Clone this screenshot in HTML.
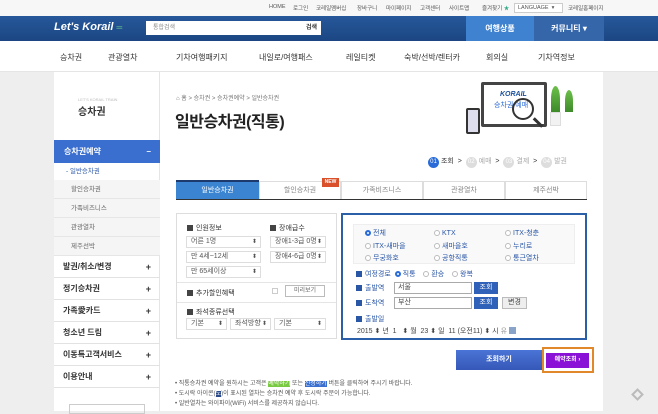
<!DOCTYPE html>
<html><head><meta charset="utf-8"><style>
*{margin:0;padding:0;box-sizing:border-box}
body{width:658px;height:411px;overflow:hidden;background:#eeeeee;font-family:"Liberation Sans","Noto Sans CJK KR",sans-serif;font-size:7px;color:#444;position:relative}
.a{position:absolute;white-space:nowrap}
.sel{position:absolute;height:12px;border:1px solid #ddd;background:#fff;font-size:7px;line-height:10px;padding-left:4px;color:#555}
.sel:after{content:"⬍";position:absolute;right:3px;top:0;font-size:6px}
.bul{display:inline-block;width:6px;height:6px;background:#444;margin-right:3px;vertical-align:-1px}
.bbul{display:inline-block;width:6px;height:6px;background:#2a56a6;margin-right:3px;vertical-align:-1px}
.rad{display:inline-block;width:6px;height:6px;border:1px solid #bbb;border-radius:50%;margin-right:2px;vertical-align:-1px;background:#fff}
.rad.on{border:2px solid #2a6bd8}
.menu{position:absolute;left:54px;width:106px;height:22px;border-bottom:1px solid #e2e2e2;font-size:8px;font-weight:bold;color:#333;line-height:22px;padding-left:9px}
.menu b{position:absolute;right:9px;font-size:9px}
.sub{position:absolute;left:54px;width:106px;height:19px;background:#f5f5f5;border-bottom:1px solid #e6e6e6;font-size:6.5px;color:#666;line-height:19px;padding-left:17px}
.tab{position:absolute;top:181px;height:18px;border:1px solid #ddd;border-bottom:none;background:#fff;font-size:7px;color:#888;text-align:center;line-height:18px}
.tl{position:absolute;top:4px;font-size:5.5px;color:#555}
</style></head><body>
<!-- top bar -->
<div class="a" style="left:0;top:0;width:658px;height:16px;background:#f7f7f7"></div>
<div class="tl" style="left:269px">HOME</div>
<div class="tl" style="left:293px">로그인</div>
<div class="tl" style="left:316px">코레일멤버십</div>
<div class="tl" style="left:357px">장바구니</div>
<div class="tl" style="left:386px">마이페이지</div>
<div class="tl" style="left:420px">고객센터</div>
<div class="tl" style="left:449px">사이트맵</div>
<div class="tl" style="left:482px">즐겨찾기 <span style="color:#3a8">★</span></div>
<div class="a" style="left:514px;top:3px;width:49px;height:10px;border:1px solid #ccc;background:#fff;font-size:5.5px;line-height:8px;padding-left:3px;color:#555">LANGUAGE &nbsp;▾</div>
<div class="tl" style="left:568px">코레일홈페이지</div>
<!-- blue header -->
<div class="a" style="left:0;top:16px;width:658px;height:25px;background:linear-gradient(#27589a,#1b4683)"></div>
<div class="a" style="left:54px;top:21px;font-size:11px;font-weight:bold;font-style:italic;color:#fff">Let's Korail <span style="color:#6fd28a;font-size:8px">═</span></div>
<div class="a" style="left:146px;top:21px;width:175px;height:14px;background:#fff;font-size:6px;color:#888;line-height:14px;padding-left:7px">통합검색<span style="position:absolute;right:4px;color:#333;font-weight:bold">검색</span></div>
<div class="a" style="left:466px;top:16px;width:68px;height:25px;background:#3f82cf;color:#fff;font-size:8px;font-weight:bold;text-align:center;line-height:25px">여행상품</div>
<div class="a" style="left:534px;top:16px;width:70px;height:25px;background:#3466a9;color:#fff;font-size:8px;font-weight:bold;text-align:center;line-height:25px">커뮤니티 ▾</div>
<!-- nav -->
<div class="a" style="left:0;top:41px;width:658px;height:31px;background:#fff;border-bottom:1px solid #e5e5e5"></div>
<div class="a" style="top:52px;left:60px;font-size:8px;color:#333">승차권</div>
<div class="a" style="top:52px;left:108px;font-size:8px;color:#333">관광열차</div>
<div class="a" style="top:52px;left:176px;font-size:8px;color:#333">기차여행패키지</div>
<div class="a" style="top:52px;left:259px;font-size:8px;color:#333">내일로/여행패스</div>
<div class="a" style="top:52px;left:346px;font-size:8px;color:#333">레일티켓</div>
<div class="a" style="top:52px;left:404px;font-size:8px;color:#333">숙박/선박/렌터카</div>
<div class="a" style="top:52px;left:486px;font-size:8px;color:#333">회의실</div>
<div class="a" style="top:52px;left:538px;font-size:8px;color:#333">기차역정보</div>
<!-- panels -->
<div class="a" style="left:54px;top:72px;width:106px;height:339px;background:#fff;border-right:1px solid #e5e5e5"></div>
<div class="a" style="left:160px;top:72px;width:443px;height:339px;background:#fff"></div>
<div class="a" style="left:78px;top:97px;font-size:4px;color:#bbb">LET'S KORAIL TRAIN</div>
<div class="a" style="left:78px;top:103px;font-size:10px;font-weight:bold;color:#333">승차권</div>
<div class="a" style="left:54px;top:140px;width:106px;height:23px;background:#3a6fd0;color:#fff;font-size:8px;font-weight:bold;line-height:23px;padding-left:10px">승차권예약<span style="position:absolute;right:9px">–</span></div>
<div class="a" style="left:54px;top:163px;width:106px;height:18px;font-size:6.5px;color:#2a56a6;line-height:18px;padding-left:12px">- 일반승차권</div>
<div class="sub" style="top:180px">할인승차권</div>
<div class="sub" style="top:199px">가족비즈니스</div>
<div class="sub" style="top:218px">관광열차</div>
<div class="sub" style="top:237px">제주선박</div>
<div class="menu" style="top:256px">발권/취소/변경<b>+</b></div>
<div class="menu" style="top:278px">정기승차권<b>+</b></div>
<div class="menu" style="top:300px">가족愛카드<b>+</b></div>
<div class="menu" style="top:322px">청소년 드림<b>+</b></div>
<div class="menu" style="top:344px">이동특고객서비스<b>+</b></div>
<div class="menu" style="top:366px">이용안내<b>+</b></div>
<div class="a" style="left:69px;top:404px;width:76px;height:10px;border:1px solid #ccc"></div>
<!-- main -->
<div class="a" style="left:176px;top:93px;font-size:6px;color:#777">⌂ 홈 &gt; 승차권 &gt; 승차권예약 &gt; 일반승차권</div>
<div class="a" style="left:175px;top:108px;font-size:16px;font-weight:bold;color:#222;letter-spacing:-0.5px">일반승차권(직통)</div>
<!-- illustration -->
<div class="a" style="left:481px;top:82px;width:66px;height:45px;border:3px solid #444;border-radius:2px;background:#fff"></div>
<div class="a" style="left:500px;top:91px;font-size:7px;font-weight:bold;font-style:italic;color:#1a4f9c">KORAIL</div>
<div class="a" style="left:494px;top:100px;font-size:7px;color:#2a6bd8">승차권 예매</div>
<div class="a" style="left:466px;top:108px;width:14px;height:26px;border:2px solid #333;border-radius:2px;background:#dde"></div>
<div class="a" style="left:512px;top:98px;width:22px;height:22px;border:2px solid #333;border-radius:50%"></div>
<div class="a" style="left:532px;top:121px;width:12px;height:3px;background:#333;transform:rotate(45deg)"></div>
<div class="a" style="left:551px;top:86px;width:9px;height:26px;background:linear-gradient(#6cbf4a,#3d8a2a);border-radius:50% 50% 0 0"></div>
<div class="a" style="left:550px;top:112px;width:11px;height:14px;background:#f2f2f2;border:1px solid #ddd"></div>
<div class="a" style="left:565px;top:90px;width:8px;height:22px;background:linear-gradient(#6cbf4a,#3d8a2a);border-radius:50% 50% 0 0"></div>
<!-- steps -->
<div class="a" style="left:428px;top:156px;font-size:7px;color:#333"><span style="display:inline-block;width:11px;height:11px;border-radius:50%;background:#2a6bd8;color:#fff;font-size:6px;text-align:center;line-height:11px">01</span> 조회 &nbsp;&gt;&nbsp; <span style="display:inline-block;width:11px;height:11px;border-radius:50%;background:#ddd;color:#fff;font-size:6px;text-align:center;line-height:11px">02</span> <span style="color:#aaa">예매</span> &nbsp;&gt;&nbsp; <span style="display:inline-block;width:11px;height:11px;border-radius:50%;background:#ddd;color:#fff;font-size:6px;text-align:center;line-height:11px">03</span> <span style="color:#aaa">결제</span> &nbsp;&gt;&nbsp; <span style="display:inline-block;width:11px;height:11px;border-radius:50%;background:#ddd;color:#fff;font-size:6px;text-align:center;line-height:11px">04</span> <span style="color:#aaa">발권</span></div>
<!-- tabs -->
<div class="tab" style="left:176px;top:180px;width:83px;height:20px;background:#3b84d2;color:#fff;border:none;border-top:2px solid #1c3a6e;line-height:17px">일반승차권</div>
<div class="tab" style="left:259px;width:82px">할인승차권</div>
<div class="a" style="left:322px;top:178px;width:17px;height:9px;background:#d9502a;color:#fff;font-size:5px;font-weight:bold;text-align:center;line-height:9px">NEW</div>
<div class="tab" style="left:341px;width:82px">가족비즈니스</div>
<div class="tab" style="left:423px;width:82px">관광열차</div>
<div class="tab" style="left:505px;width:82px">제주선박</div>
<div class="a" style="left:176px;top:199px;width:411px;height:1px;background:#333"></div>
<!-- left box -->
<div class="a" style="left:176px;top:213px;width:161px;height:126px;border:1px solid #ddd"></div>
<div class="a" style="left:187px;top:223px;color:#333"><span class="bul"></span>인원정보</div>
<div class="a" style="left:270px;top:223px;color:#333"><span class="bul"></span>장애급수</div>
<div class="sel" style="left:186px;top:236px;width:75px">어른 1명</div>
<div class="sel" style="left:186px;top:251px;width:75px">만 4세~12세</div>
<div class="sel" style="left:186px;top:266px;width:75px">만 65세이상</div>
<div class="sel" style="left:270px;top:236px;width:56px">장애1-3급 0명</div>
<div class="sel" style="left:270px;top:251px;width:56px">장애4-6급 0명</div>
<div class="a" style="left:177px;top:282px;width:159px;height:1px;background:#e5e5e5"></div>
<div class="a" style="left:187px;top:288px;color:#333"><span class="bul"></span>추가할인혜택</div>
<div class="a" style="left:272px;top:288px;width:6px;height:6px;border:1px solid #ccc"></div>
<div class="a" style="left:285px;top:285px;width:40px;height:12px;border:1px solid #bbb;font-size:6px;text-align:center;line-height:10px;color:#666">미리보기</div>
<div class="a" style="left:177px;top:302px;width:159px;height:1px;background:#e5e5e5"></div>
<div class="a" style="left:187px;top:307px;color:#333"><span class="bul"></span>좌석종류선택</div>
<div class="sel" style="left:186px;top:318px;width:41px">기본</div>
<div class="sel" style="left:230px;top:318px;width:41px">좌석방향</div>
<div class="sel" style="left:274px;top:318px;width:52px">기본</div>
<!-- right box -->
<div class="a" style="left:341px;top:213px;width:246px;height:127px;border:2px solid #2b5fa8"></div>
<div class="a" style="left:353px;top:224px;width:222px;height:40px;background:#f9f9f9;border:1px solid #eee"></div>
<div class="a" style="left:365px;top:228px;color:#2a56a6;line-height:12.5px">
<span class="rad on"></span>전체<br><span class="rad"></span>ITX-새마을<br><span class="rad"></span>무궁화호</div>
<div class="a" style="left:434px;top:228px;color:#2a56a6;line-height:12.5px">
<span class="rad"></span>KTX<br><span class="rad"></span>새마을호<br><span class="rad"></span>공항직통</div>
<div class="a" style="left:505px;top:228px;color:#2a56a6;line-height:12.5px">
<span class="rad"></span>ITX-청춘<br><span class="rad"></span>누리로<br><span class="rad"></span>통근열차</div>
<div class="a" style="left:356px;top:269px;color:#2a56a6"><span class="bbul"></span>여정경로 &nbsp;<span class="rad on"></span>직통 &nbsp;&nbsp;&nbsp;<span class="rad"></span>환승 &nbsp;&nbsp;&nbsp;<span class="rad"></span>왕복</div>
<div class="a" style="left:356px;top:283px;color:#2a56a6"><span class="bbul"></span>출발역</div>
<div class="a" style="left:394px;top:282px;width:78px;height:12px;border:1px solid #aaa;font-size:7px;line-height:10px;padding-left:3px">서울</div>
<div class="a" style="left:474px;top:282px;width:24px;height:12px;background:#2f61b8;color:#fff;font-size:7px;text-align:center;line-height:12px">조회</div>
<div class="a" style="left:356px;top:298px;color:#2a56a6"><span class="bbul"></span>도착역</div>
<div class="a" style="left:394px;top:297px;width:78px;height:12px;border:1px solid #aaa;font-size:7px;line-height:10px;padding-left:3px">부산</div>
<div class="a" style="left:474px;top:297px;width:24px;height:12px;background:#2f61b8;color:#fff;font-size:7px;text-align:center;line-height:12px">조회</div>
<div class="a" style="left:502px;top:297px;width:25px;height:12px;background:#eee;border:1px solid #bbb;font-size:7px;text-align:center;line-height:10px">변경</div>
<div class="a" style="left:356px;top:314px;color:#2a56a6"><span class="bbul"></span>출발일</div>
<div class="a" style="left:357px;top:326px;font-size:7px;color:#444">2015 ⬍ 년 &nbsp;1 &nbsp;&nbsp;⬍ 월 &nbsp;23 ⬍ 일 &nbsp;11 (오전11) ⬍ 시 <span style="color:#999">유</span> <span style="display:inline-block;width:7px;height:7px;background:#8aa3c9;vertical-align:-1px"></span></div>
<!-- buttons -->
<div class="a" style="left:456px;top:350px;width:86px;height:20px;background:linear-gradient(#4a74d6,#3558b8);color:#fff;font-size:7px;text-align:center;line-height:20px;font-weight:bold">조회하기</div>
<div class="a" style="left:542px;top:347px;width:52px;height:26px;border:2px solid #e0882a"></div>
<div class="a" style="left:546px;top:353px;width:43px;height:15px;background:#8a12d6;color:#fff;font-size:6px;font-weight:bold;text-align:center;line-height:15px">예약조회 ›</div>
<!-- notes -->
<div class="a" style="left:175px;top:379px;font-size:6px;color:#555;line-height:10px">• 직통승차권 예약을 원하시는 고객은 <span style="background:#7ac943;color:#fff">예약하기</span> 또는 <span style="background:#3a6fd0;color:#fff">신청하기</span> 버튼을 클릭하여 주시기 바랍니다.<br>• 도시락 아이콘(<span style="background:#2a4a8a;color:#fff">도</span>)이 표시된 열차는 승차권 예약 후 도시락 주문이 가능합니다.<br>• 일반열차는 와이파이(WiFi) 서비스를 제공하지 않습니다.</div>
<div class="a" style="left:633px;top:390px;width:9px;height:9px;border:2px solid #bbb;transform:rotate(45deg)"></div>
</body></html>
